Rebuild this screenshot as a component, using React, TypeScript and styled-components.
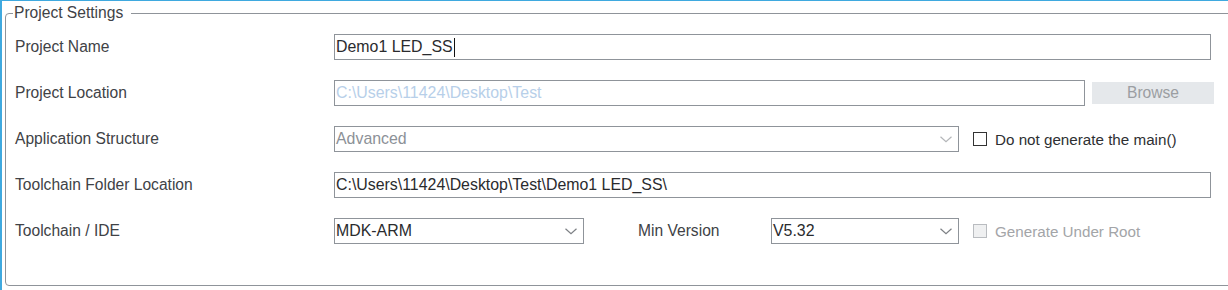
import React from "react";
import styled, { createGlobalStyle } from "styled-components";

const Global = createGlobalStyle`
  html, body { margin: 0; padding: 0; background: #ffffff; overflow: hidden; }
  body { font-family: "Liberation Sans", Arial, sans-serif; }
`;

const Frame = styled.div`
  width: 1226px;
  height: 289px;
  border-top: 1px solid #3fa9df;
  border-left: 2px solid #3fa9df;
  overflow: hidden;
  background: #fff;
`;

const Group = styled.fieldset`
  box-sizing: border-box;
  margin: 3px 0 0 3px;
  width: 1260px;
  height: 282px;
  border: 1px solid #8f949a;
  border-radius: 4px;
  padding: 12px 0 0 9px;
  font-size: 15.6px;
  color: #404246;
`;

const Legend = styled.legend`
  padding: 0 8px 0 1px;
  margin-left: -2px;
  line-height: 18px;
  font-size: 15.6px;
  color: #404246;
`;

const Rows = styled.div`
  display: flex;
  flex-direction: column;
  gap: 20px;
`;

const Row = styled.div`
  display: flex;
  align-items: center;
  height: 26px;
`;

const Label = styled.span<{ $w?: number }>`
  width: ${(p) => p.$w ?? 319}px;
  flex: none;
  white-space: nowrap;
  color: #404246;
`;

const Field = styled.div<{ $w: number; $tone?: "normal" | "disabled" | "muted" }>`
  box-sizing: border-box;
  width: ${(p) => p.$w}px;
  height: 26px;
  flex: none;
  border: 1px solid #8f949a;
  display: flex;
  align-items: center;
  padding: 0 6px 0 1px;
  white-space: nowrap;
  font-size: 15.9px;
  color: ${(p) =>
    p.$tone === "disabled" ? "#b7cfe9" : p.$tone === "muted" ? "#8c9197" : "#2a2b2e"};
`;

const Value = styled.span`
  flex: 1;
  display: flex;
  align-items: center;
`;

const Caret = styled.span`
  display: inline-block;
  width: 1px;
  height: 19px;
  background: #111;
  margin-left: 1px;
`;

const BrowseButton = styled.button`
  box-sizing: border-box;
  width: 122px;
  height: 22px;
  margin-left: 7px;
  border: none;
  background: #e5e8eb;
  color: #9b9ea2;
  font-family: inherit;
  font-size: 15.6px;
  padding: 0;
`;

const Check = styled.label<{ $disabled?: boolean }>`
  display: flex;
  align-items: center;
  gap: 8px;
  margin-left: 14px;
  white-space: nowrap;
  font-size: 15.2px;
  color: ${(p) => (p.$disabled ? "#a3a5a8" : "#2e2f32")};
`;

const Box = styled.span<{ $disabled?: boolean }>`
  box-sizing: border-box;
  width: 14px;
  height: 14px;
  border: 1px solid ${(p) => (p.$disabled ? "#b9bcc0" : "#333")};
  background: ${(p) => (p.$disabled ? "#eff0f1" : "#fff")};
  flex: none;
`;

const Chevron = ({ light }: { light?: boolean }) => (
  <svg width="12" height="7" viewBox="0 0 12 7" style={{ flex: "none" }}>
    <polyline
      points="0.5,0.8 6,5.8 11.5,0.8"
      fill="none"
      stroke={light ? "#b4b6b9" : "#7d8085"}
      strokeWidth="1.2"
    />
  </svg>
);

export default function App() {
  return (
    <>
      <Global />
      <Frame>
        <Group>
          <Legend>Project Settings</Legend>
          <Rows>
            <Row>
              <Label>Project Name</Label>
              <Field $w={877}>
                <Value>
                  Demo1 LED_SS
                  <Caret />
                </Value>
              </Field>
            </Row>
            <Row>
              <Label>Project Location</Label>
              <Field $w={751} $tone="disabled">
                <Value>C:\Users\11424\Desktop\Test</Value>
              </Field>
              <BrowseButton>Browse</BrowseButton>
            </Row>
            <Row>
              <Label>Application Structure</Label>
              <Field $w={625} $tone="muted">
                <Value>Advanced</Value>
                <Chevron light />
              </Field>
              <Check>
                <Box />
                Do not generate the main()
              </Check>
            </Row>
            <Row>
              <Label>Toolchain Folder Location</Label>
              <Field $w={877}>
                <Value>C:\Users\11424\Desktop\Test\Demo1 LED_SS\</Value>
              </Field>
            </Row>
            <Row>
              <Label>Toolchain / IDE</Label>
              <Field $w={250}>
                <Value>MDK-ARM</Value>
                <Chevron />
              </Field>
              <Label $w={133} style={{ marginLeft: 54 }}>
                Min Version
              </Label>
              <Field $w={188}>
                <Value>V5.32</Value>
                <Chevron />
              </Field>
              <Check $disabled>
                <Box $disabled />
                Generate Under Root
              </Check>
            </Row>
          </Rows>
        </Group>
      </Frame>
    </>
  );
}
